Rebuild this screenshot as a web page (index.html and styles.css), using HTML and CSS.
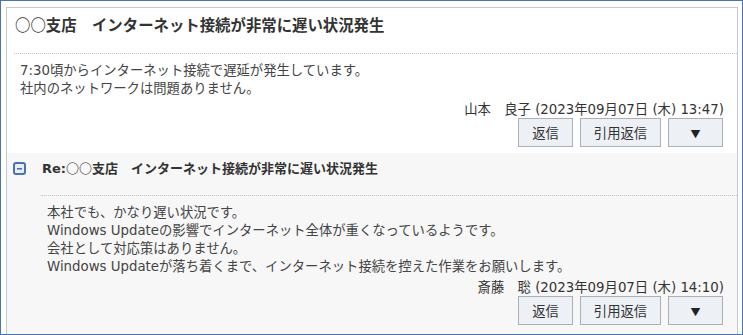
FILE: index.html
```html
<!DOCTYPE html>
<html>
<head>
  <meta charset="UTF-8" />
  <title>スレッド</title>
  <link rel="stylesheet" href="styles.css">
</head>
<body>

  <div class="ventana">
    <div class="hilo">

      <div class="post primero">
        <div class="contenido">
          <div class="titulo grande"><span class="cjk">○○</span>支店　インターネット接続が非常に遅い状況発生</div>
          <div class="cuerpo">
            7:30頃からインターネット接続で遅延が発生しています。<br>
            社内のネットワークは問題ありません。
          </div>
          <div class="pie">
            <div class="autor">山本　良子 (2023年09月07日 (木) 13:47)</div>
            <div class="botones">
              <button class="boton">返信</button>
              <button class="boton ancho">引用返信</button>
              <button class="boton"><span class="flecha">▼</span></button>
            </div>
          </div>
        </div>
      </div>

      <div class="post respuesta">
        <div class="icono">
          <svg width="13" height="13" viewBox="0 0 13 13">
            <rect x="1" y="1" width="11" height="11" rx="2" fill="#e9eef6" stroke="#4a72b0" stroke-width="2"/>
            <rect x="4" y="6" width="5" height="1.6" fill="#4a72b0"/>
          </svg>
        </div>
        <div class="contenido">
          <div class="titulo">Re:<span class="cjk">○○</span>支店　インターネット接続が非常に遅い状況発生</div>
          <div class="cuerpo">
            本社でも、かなり遅い状況です。<br>
            Windows Updateの影響でインターネット全体が重くなっているようです。<br>
            会社として対応策はありません。<br>
            Windows Updateが落ち着くまで、インターネット接続を控えた作業をお願いします。
          </div>
          <div class="pie">
            <div class="autor">斎藤　聡 (2023年09月07日 (木) 14:10)</div>
            <div class="botones">
              <button class="boton">返信</button>
              <button class="boton ancho">引用返信</button>
              <button class="boton"><span class="flecha">▼</span></button>
            </div>
          </div>
        </div>
      </div>

    </div>
  </div>

</body>
</html>
```

FILE: styles.css
```css
body {
  margin: 0;
  font-family: "DejaVu Sans", "Noto Sans CJK JP", sans-serif;
  font-size: 13.33px;
  color: #444;
  background-color: #fff;
}
.cjk {
  font-family: "Noto Sans CJK JP", sans-serif;
}
.ventana {
  height: 335px;
  box-sizing: border-box;
  border: 1px solid #4a72b4;
  padding: 6px 4px 0 5px;
  overflow: hidden;
}
.hilo {
  height: 100%;
  border: 1px solid #c9c9c9;
  border-bottom: none;
}
.post {
  display: flex;
  padding-left: 7px;
}
.primero {
  background-color: #fff;
  padding-bottom: 6px;
}
.respuesta {
  background-color: #f7f7f7;
  padding-left: 0;
  min-height: 190px;
}
.icono {
  width: 34px;
  flex-shrink: 0;
  padding-left: 6px;
  padding-top: 9px;
  box-sizing: border-box;
}
.icono svg {
  display: block;
}
.contenido {
  flex: 1;
}
.titulo {
  font-size: 13px;
  font-weight: bold;
  color: #333;
  line-height: 18px;
  padding: 6px 0 17px 1px;
  border-bottom: 1px dotted #c4c4c4;
}
.titulo.grande {
  font-size: 15.4px;
  line-height: 20px;
  padding: 6px 0 17px 1px;
}
.cuerpo {
  padding: 8px 0 0 6px;
  line-height: 18px;
}
.pie {
  padding-right: 13px;
  text-align: right;
}
.autor {
  margin-top: 3px;
  line-height: 17px;
  color: #333;
}
.botones {
  display: flex;
  justify-content: flex-end;
  gap: 7px;
  padding-right: 1px;
}
.boton {
  width: 55px;
  height: 29px;
  padding: 0;
  font-family: "Noto Sans CJK JP", sans-serif;
  font-size: 13.33px;
  color: #333;
  background-color: #edf1f6;
  border: 1px solid #aab0b7;
  border-radius: 0;
  cursor: pointer;
}
.boton.ancho {
  width: 81px;
}
.boton:hover {
  background-color: #e1e7ef;
}
.flecha {
  font-size: 10px;
  color: #222;
}
```
